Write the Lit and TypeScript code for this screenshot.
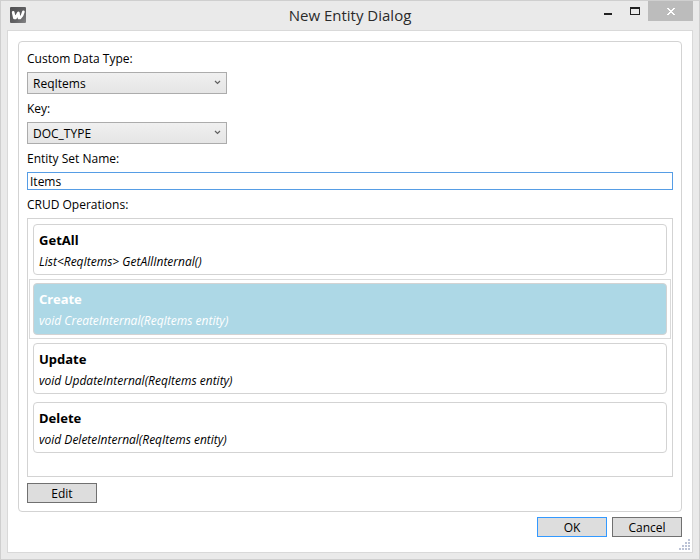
import { LitElement, html, css, svg } from "lit";
import { customElement, property, state } from "lit/decorators.js";
import { classMap } from "lit/directives/class-map.js";

interface Operation {
  name: string;
  signature: string;
}

const OPERATIONS: Operation[] = [
  { name: "GetAll", signature: "List<ReqItems> GetAllInternal()" },
  { name: "Create", signature: "void CreateInternal(ReqItems entity)" },
  { name: "Update", signature: "void UpdateInternal(ReqItems entity)" },
  { name: "Delete", signature: "void DeleteInternal(ReqItems entity)" },
];

// Filled corner of the window: rows of dots that grow towards the edge.
const GRIP_DOTS: Array<[number, number]> = [
  [9, 0],
  [6, 3], [9, 3],
  [3, 6], [6, 6], [9, 6],
  [0, 9], [3, 9], [6, 9], [9, 9],
];

@customElement("title-bar")
export class TitleBar extends LitElement {
  @property() heading = "";

  static styles = css`
    :host {
      display: grid;
      grid-template-columns: 1fr auto 1fr;
      height: 29px;
    }
    .logo {
      width: 16px;
      height: 16px;
      margin: 6px 0 0 9px;
    }
    .title {
      margin: 0;
      font-size: 15px;
      font-weight: 400;
      line-height: 29px;
      color: #2b2b2b;
    }
    .controls {
      display: flex;
      justify-content: flex-end;
      padding-right: 6px;
    }
    button {
      width: 27px;
      height: 20px;
      padding: 0;
      border: 0;
      background: none;
    }
    button.close {
      width: 45px;
      background: #bcbcbc;
    }
    svg {
      display: block;
    }
    button svg {
      margin: 0 auto;
    }
  `;

  render() {
    return html`
      <svg class="logo" viewBox="0 0 16 16" aria-hidden="true">
        <defs>
          <linearGradient id="metal" x1="0" y1="0" x2="1" y2="1">
            <stop offset="0" stop-color="#505052" />
            <stop offset="0.6" stop-color="#626264" />
            <stop offset="1" stop-color="#858587" />
          </linearGradient>
        </defs>
        <rect width="16" height="16" rx="1" fill="url(#metal)" />
        <path
          d="M3.2 5.4 L4.4 11 L5.4 11 L8.4 6 L9 11 L10 11 C11.8 9.6 12.8 7.6 13.4 4.8"
          fill="none" stroke="#fff" stroke-width="2.7"
          stroke-linecap="round" stroke-linejoin="round" />
      </svg>
      <h1 class="title">${this.heading}</h1>
      <div class="controls">
        <button aria-label="Minimize">
          <svg width="27" height="20"><rect x="10" y="12" width="8" height="2" fill="#222" /></svg>
        </button>
        <button aria-label="Maximize">
          <svg width="27" height="20">
            <path d="M9 6h10v8H9z M10 8v5h8V8z" fill="#222" fill-rule="evenodd" />
          </svg>
        </button>
        <button class="close" aria-label="Close">
          <svg width="45" height="20" shape-rendering="crispEdges">
            <path
              d="M19 7h2v1h1v1h2v-1h1v-1h2v1h-1v1h-1v1h-1v1h1v1h1v1h1v1h-2v-1h-1v-1h-2v1h-1v1h-2v-1h1v-1h1v-1h1v-1h-1v-1h-1v-1h-1z"
              fill="#fff" />
          </svg>
        </button>
      </div>
    `;
  }
}

@customElement("app-root")
export class AppRoot extends LitElement {
  @state() private selected = "Create";

  static styles = css`
    :host {
      display: flex;
      flex-direction: column;
      box-sizing: border-box;
      min-height: 100vh;
      border: 1px solid #cfcfcf;
      background: #eaeaea;
      color: #000;
      font: 12px/16px "Open Sans", "Noto Sans", sans-serif;
    }
    * {
      box-sizing: border-box;
    }
    .client {
      position: relative;
      flex: 1;
      display: flex;
      flex-direction: column;
      margin: 0 6px 6px;
      padding: 10px 10px 15px;
      border: 1px solid #d9d9d9;
      background: #fff;
    }
    .group {
      flex: 1;
      display: flex;
      flex-direction: column;
      align-items: flex-start;
      padding: 9px 8px 8px;
      border: 1px solid #d3d3d3;
      border-radius: 4px;
    }
    .label {
      margin-bottom: 5px;
    }
    .combo {
      display: grid;
      grid-template-columns: 1fr 20px;
      align-items: center;
      width: 200px;
      margin-bottom: 7px;
    }
    select,
    input,
    button {
      font: inherit;
      color: inherit;
      border-radius: 0;
      outline: none;
    }
    select {
      grid-area: 1 / 1 / 2 / 3;
      appearance: none;
      height: 22px;
      padding: 1px 20px 0 5px;
      border: 1px solid #acacac;
      background: linear-gradient(#f0f0f0, #e5e5e5);
    }
    .arrow {
      grid-area: 1 / 2;
      width: 7px;
      height: 5px;
      margin: 0 0 2px 7px;
      pointer-events: none;
      z-index: 1;
    }
    input {
      align-self: stretch;
      height: 18px;
      margin: 0 0 7px;
      padding: 0 2px;
      border: 1px solid #569de5;
      background: #fff;
    }
    .list {
      flex: 1;
      align-self: stretch;
      margin: 0 0 6px;
      padding: 1px;
      border: 1px solid #d3d3d3;
    }
    .item {
      padding: 3px;
      border: 1px solid transparent;
    }
    .card {
      min-height: 51px;
      padding: 6px 5px 3px;
      border: 1px solid #d3d3d3;
      border-radius: 4px;
    }
    .item.selected {
      border-color: #dadada;
    }
    .selected .card {
      min-height: 52px;
      background: #add8e6;
      color: #fff;
    }
    .name {
      margin: 0 0 5px;
      font-family: "Noto Sans", "Open Sans", sans-serif;
      font-size: 13px;
      font-weight: 700;
      line-height: 18px;
    }
    .signature {
      margin: 0;
      font-style: italic;
    }
    button {
      width: 70px;
      height: 20px;
      padding: 1px 0 0;
      border: 1px solid #707070;
      background: #ddd;
    }
    button.default {
      border-color: #3399ff;
    }
    .actions {
      display: flex;
      justify-content: flex-end;
      gap: 5px;
      margin-top: 5px;
    }
    .grip {
      position: absolute;
      right: 2px;
      bottom: 2px;
    }
  `;

  private combo(id: string, label: string, value: string) {
    return html`
      <label class="label" for=${id}>${label}</label>
      <div class="combo">
        <select id=${id}><option selected>${value}</option></select>
        <svg class="arrow" viewBox="0 0 7 5" aria-hidden="true">
          <path d="M1 1 L3.5 3.5 L6 1" fill="none" stroke="#606060" stroke-width="1.2" />
        </svg>
      </div>
    `;
  }

  render() {
    return html`
      <title-bar heading="New Entity Dialog"></title-bar>
      <main class="client">
        <section class="group">
          ${this.combo("data-type", "Custom Data Type:", "ReqItems")}
          ${this.combo("key", "Key:", "DOC_TYPE")}
          <label class="label" for="set-name">Entity Set Name:</label>
          <input id="set-name" type="text" .value=${"Items"} />
          <span class="label" id="operations">CRUD Operations:</span>
          <div class="list" role="listbox" aria-labelledby="operations">
            ${OPERATIONS.map(
              (op) => html`
                <div
                  class=${classMap({ item: true, selected: op.name === this.selected })}
                  role="option"
                  aria-selected=${op.name === this.selected}
                  @click=${() => (this.selected = op.name)}
                >
                  <div class="card">
                    <p class="name">${op.name}</p>
                    <p class="signature">${op.signature}</p>
                  </div>
                </div>
              `,
            )}
          </div>
          <button>Edit</button>
        </section>
        <div class="actions">
          <button class="default">OK</button>
          <button>Cancel</button>
        </div>
        <svg class="grip" width="11" height="11" aria-hidden="true">
          ${GRIP_DOTS.map(([x, y]) => svg`<rect x=${x} y=${y} width="2" height="2" fill="#bcc3d6" />`)}
        </svg>
      </main>
    `;
  }
}
